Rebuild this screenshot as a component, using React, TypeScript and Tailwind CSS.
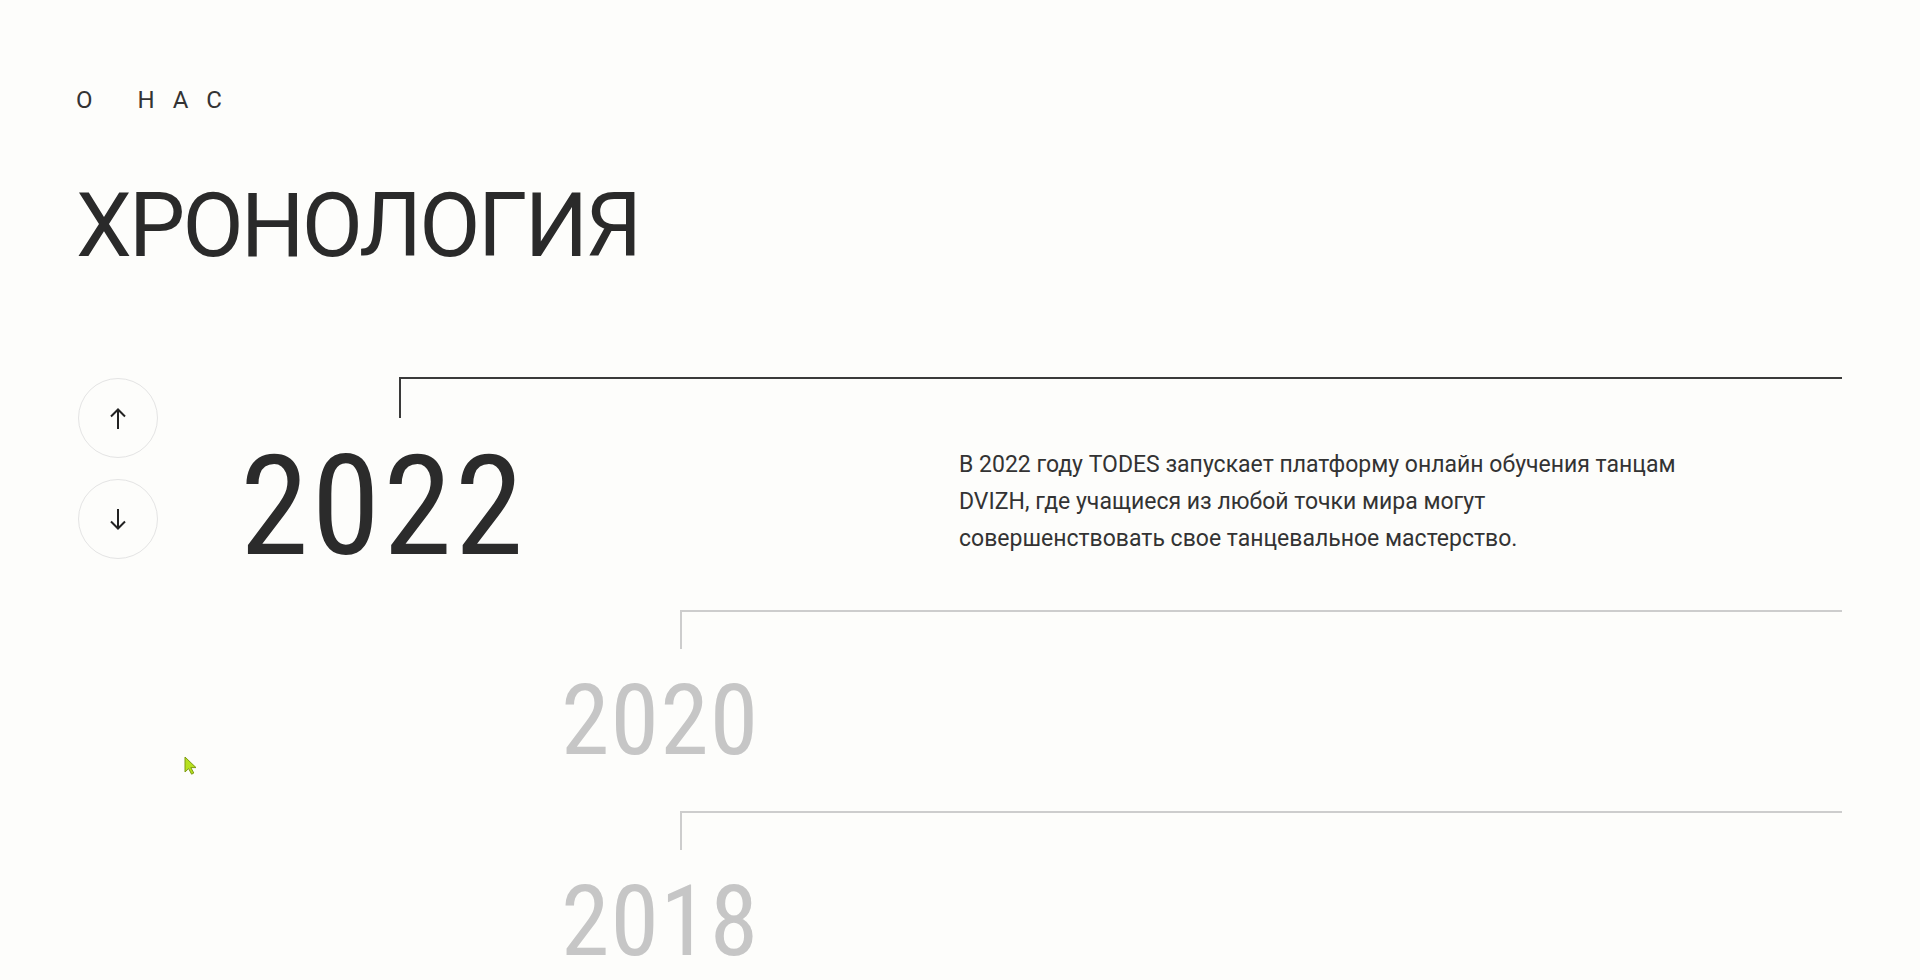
const roboto = { fontFamily: 'Roboto, "Liberation Sans", sans-serif' }

function ArrowIcon({ down = false }: { down?: boolean }) {
  return (
    <svg
      width="16"
      height="21"
      viewBox="0 0 16 21"
      fill="none"
      stroke="#222"
      strokeWidth="2"
      className={down ? 'rotate-180' : ''}
    >
      <path d="M1 8.5 8 1.5l7 7" />
      <path d="M8 1.5V21" />
    </svg>
  )
}

function NavButton({ down = false }: { down?: boolean }) {
  return (
    <button
      type="button"
      className="flex h-20 w-20 items-center justify-center rounded-full border border-[#e4e4e4] bg-transparent"
    >
      <ArrowIcon down={down} />
    </button>
  )
}

type Item = {
  year: string
  active?: boolean
  text?: string[]
}

const items: Item[] = [
  {
    year: '2022',
    active: true,
    text: [
      'В 2022 году TODES запускает платформу онлайн обучения танцам',
      'DVIZH, где учащиеся из любой точки мира могут',
      'совершенствовать свое танцевальное мастерство.',
    ],
  },
  { year: '2020' },
  { year: '2018' },
]

function ActiveItem({ item }: { item: Item }) {
  return (
    <div className="ml-[82px] flex flex-col">
      <div className="ml-[159px] h-[41px] border-t-2 border-l-2 border-[#3a3a3a]" />
      <div className="mt-[19px] flex items-start">
        <div
          className="w-[719px] text-[139px] leading-none tracking-[3px] text-[#2b2b2b] [font-stretch:75%]"
          style={roboto}
        >
          {item.year}
        </div>
        <p className="mt-[9px] text-[23px] leading-[37px] text-[#333]" style={roboto}>
          {item.text?.map((line, i) => (
            <span key={i} className="block">
              {line}
            </span>
          ))}
        </p>
      </div>
    </div>
  )
}

function InactiveItem({ item, gap }: { item: Item; gap: string }) {
  return (
    <div className={`ml-[403px] flex flex-col ${gap}`}>
      <div className="ml-[119px] h-[39px] border-t-2 border-l-2 border-[#cdcdcd]" />
      <div
        className="mt-[23px] text-[98px] leading-none tracking-[1.2px] text-[#c6c6c6] [font-stretch:75%]"
        style={roboto}
      >
        {item.year}
      </div>
    </div>
  )
}

function Cursor() {
  return (
    <svg
      className="absolute left-[184px] top-[756px]"
      width="13"
      height="19"
      viewBox="0 0 13 19"
    >
      <path
        d="M1 1v15l3.6-3.4 3 5.6 2.2-1.2-3-5.4H12z"
        fill="#b6e11f"
        stroke="#7d9a12"
        strokeWidth="1"
        strokeLinejoin="round"
      />
    </svg>
  )
}

export default function App() {
  return (
    <div className="relative h-[980px] overflow-hidden bg-[#fdfdfb] px-[78px] pt-[88px]" style={roboto}>
      <div className="-ml-[2px] text-[24px] leading-none tracking-[18px] text-[#333] [word-spacing:3px]">О НАС</div>
      <h1 className="-ml-[2px] mt-[69px] text-[89px] leading-none font-normal tracking-[-2.7px] text-[#2a2a2a]">
        ХРОНОЛОГИЯ
      </h1>

      <div className="mt-[107px] flex">
        <div className="flex w-20 shrink-0 flex-col gap-[21px] pt-px">
          <NavButton />
          <NavButton down />
        </div>

        <div className="flex flex-1 flex-col">
          <ActiveItem item={items[0]} />
          <InactiveItem item={items[1]} gap="mt-[34px]" />
          <InactiveItem item={items[2]} gap="mt-[41px]" />
        </div>
      </div>

      <Cursor />
    </div>
  )
}
